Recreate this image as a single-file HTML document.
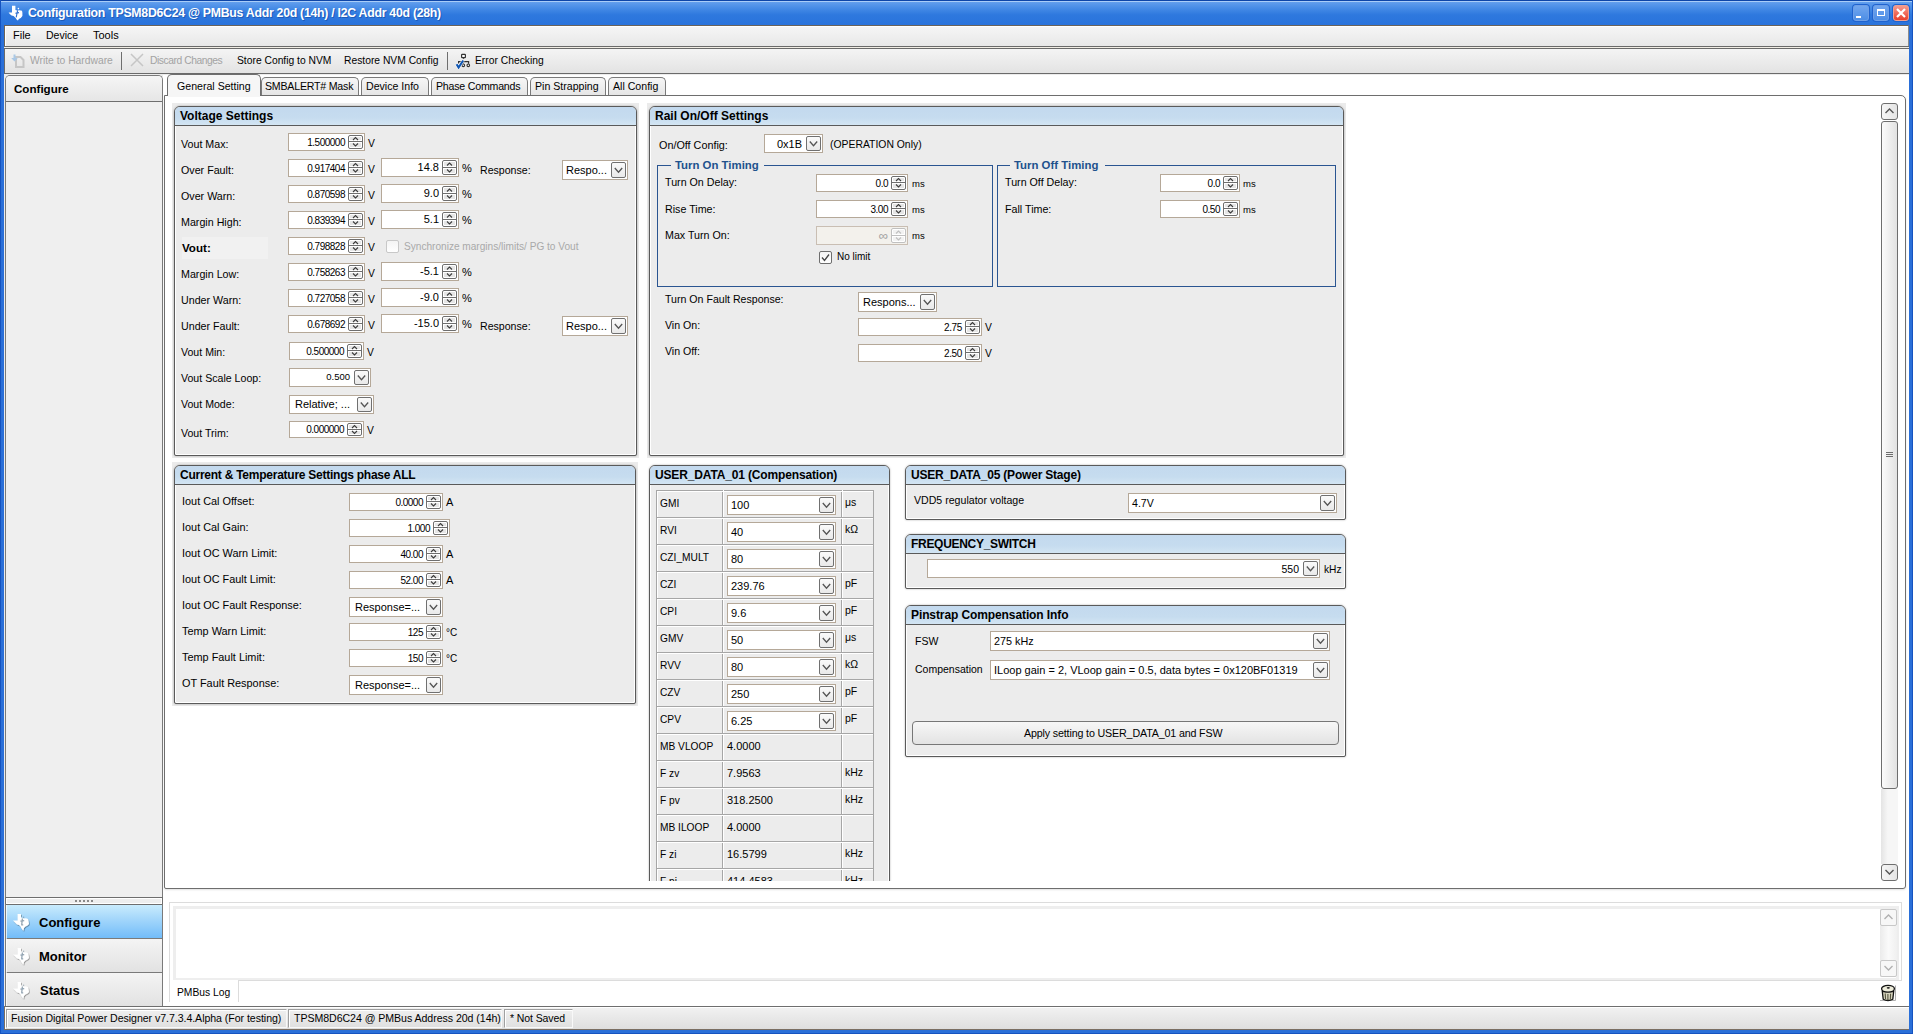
<!DOCTYPE html>
<html><head><meta charset="utf-8">
<style>
*{box-sizing:border-box;margin:0;padding:0}
html,body{width:1913px;height:1034px;overflow:hidden}
body{position:relative;background:#2a6fd8;font-family:"Liberation Sans",sans-serif;font-size:10.5px;color:#000}
.a{position:absolute}
.t{position:absolute;white-space:nowrap;line-height:normal}
.sp,.dd{position:absolute;border:1px solid #6e6e6e;border-radius:2px;background:#fff}
.dd{background:linear-gradient(#fafafa,#e9e9e9)}
.grp{position:absolute;border:1px solid #5a5a5a;border-radius:6px 6px 2px 2px;background:#ececec;box-shadow:0 0 2px rgba(0,0,0,.35),inset -1px -1px 0 #fff,inset 1px 0 0 #fff}
.tab{position:absolute;border:1px solid #7a7a7a;border-bottom:none;border-radius:5px 5px 0 0;background:linear-gradient(#f6f6f6,#e6e6e6)}
.nav{position:absolute;left:5px;width:158px;border-top:1px solid #7a7a7a;background:linear-gradient(#f4f4f4,#e2e2e2)}
.stp{position:absolute;top:1009px;height:19px;border:1px solid #a0a0a0;border-right-color:#f8f8f8;border-bottom-color:#f8f8f8;box-shadow:inset 1px 1px 0 #fff}
</style></head><body>
<div class="a" style="left:0px;top:0px;width:1913px;height:25px;background:linear-gradient(#9cc3f5 0,#6aa4ef 1px,#5d9bec 3px,#4389e5 9px,#2e78de 15px,#2a73dc 25px)"></div><svg class="a" style="left:8px;top:5px" width="16" height="16" viewBox="0 0 16 16"><path d="M4 0.8h3.4v4.2l1.6.6 2.4-.4 2.6.6.4 2v3.2l-1.6 2-2 1-.8 1.6-1-.6-1.4-2-2-2-2-.4-1.6-1.4-1.4-1.6h3.4z" fill="#fff"/><path d="M9.6 5.4l-1.4 7M7.4 8.2l3.6-.6" stroke="#2f6fd0" stroke-width="1.1" fill="none"/><circle cx="10.4" cy="3.6" r=".8" fill="#fff"/></svg><div class="t " style="left:28px;top:6px;font-size:12.3px;font-weight:bold;color:#fff;letter-spacing:-0.27px;text-shadow:1px 1px 0 #1f5bb8">Configuration TPSM8D6C24 @ PMBus Addr 20d (14h) / I2C Addr 40d (28h)</div><div class="a" style="left:0px;top:0px;width:1913px;height:1px;background:#0d45a8"></div><div class="a" style="left:0px;top:1px;width:1913px;height:1px;background:#a9cdf8"></div><div class="a" style="left:0px;top:0px;width:1px;height:1034px;background:#1553c0"></div><div class="a" style="left:1912px;top:0px;width:1px;height:1034px;background:#1553c0"></div><div class="a" style="left:0px;top:1033px;width:1913px;height:1px;background:#1553c0"></div><div class="a" style="left:1853px;top:5px;width:16px;height:16px;border-radius:3px;border:1px solid #6f9fe6;background:linear-gradient(#72a6ee,#4d8ee6);box-shadow:0 0 0 1px #1f63cf"></div><div class="a" style="left:1873px;top:5px;width:16px;height:16px;border-radius:3px;border:1px solid #6f9fe6;background:linear-gradient(#72a6ee,#4d8ee6);box-shadow:0 0 0 1px #1f63cf"></div><div class="a" style="left:1893px;top:5px;width:16px;height:16px;border-radius:3px;border:1px solid #f0a090;background:linear-gradient(#f59a8e,#e9402c);box-shadow:0 0 0 1px #1f63cf"></div><div class="a" style="left:1856px;top:16px;width:5px;height:2px;background:#fff"></div><div class="a" style="left:1877px;top:9px;width:8px;height:7px;border:1px solid #fff;border-top-width:2px"></div><svg class="a" style="left:1896px;top:8px" width="10" height="10"><path d="M1 1L9 9M9 1L1 9" stroke="#fff" stroke-width="2.2"/></svg><div class="a" style="left:4px;top:25px;width:1905px;height:1005px;background:#ececec"></div><div class="a" style="left:4px;top:25px;width:1905px;height:22px;background:linear-gradient(#f6f6f6,#e7e7e7);border-top:1px solid #6b6359;border-left:1px solid #6b6359;border-right:1px solid #8c8c8c;box-shadow:inset 1px 1px 0 #fff"></div><div class="a" style="left:4px;top:46px;width:1905px;height:1px;background:#6a6a6a"></div><div class="a" style="left:4px;top:47px;width:1905px;height:1px;background:#f1ede4"></div><div class="t " style="left:13px;top:29px;font-size:11px">File</div><div class="t " style="left:46px;top:29px;font-size:10.5px">Device</div><div class="t " style="left:93px;top:29px;font-size:11px">Tools</div><div class="a" style="left:4px;top:48px;width:1905px;height:26px;background:linear-gradient(#f4f4f4,#e3e3e3);border-top:1px solid #6a6a6a;border-bottom:1px solid #6a6a6a;border-left:1px solid #6a6a6a"></div><svg class="a" style="left:10px;top:54px" width="17" height="16" viewBox="0 0 17 16"><path d="M6 3h4.5l3 3v7h-7.5z" fill="none" stroke="#c6c6c6" stroke-width="2"/><path d="M4.5 0.5v4" stroke="#a9c8e6" stroke-width="2"/><path d="M1.2 4h6.6l-3.3 3.6z" fill="#a9c8e6"/></svg><div class="t " style="left:30px;top:55px;font-size:10.3px;color:#a3a3a3">Write to Hardware</div><div class="a" style="left:121px;top:52px;width:1px;height:18px;background:#6e6e6e"></div><svg class="a" style="left:130px;top:53px" width="14" height="14"><path d="M1 1L13 13M13 1L1 13" stroke="#c6c6c6" stroke-width="1.5"/></svg><div class="t " style="left:150px;top:55px;font-size:10.3px;color:#a3a3a3;letter-spacing:-0.45px">Discard Changes</div><div class="t " style="left:237px;top:55px;font-size:10.3px">Store Config to NVM</div><div class="t " style="left:344px;top:55px;font-size:10.3px">Restore NVM Config</div><div class="a" style="left:447px;top:52px;width:1px;height:18px;background:#6e6e6e"></div><svg class="a" style="left:455px;top:53px" width="16" height="16" viewBox="0 0 16 16"><rect x="6.6" y="1.3" width="3.8" height="3.3" rx=".6" fill="#fff" stroke="#333" stroke-width="1.2"/><path d="M8.5 4.6v1.2M3.6 10.6V8.6h10v2.2M8.3 8.6v2" stroke="#333" stroke-width="1.2" fill="none"/><circle cx="8.3" cy="12.3" r="1.3" fill="#fff" stroke="#333" stroke-width="1.1"/><circle cx="13.3" cy="12.3" r="1.3" fill="#fff" stroke="#333" stroke-width="1.1"/><path d="M1.6 11.2l2 3.3 4.6-7" stroke="#fff" stroke-width="3.2" fill="none" opacity=".8"/><path d="M1.6 11.2l2 3.3 4.6-7" stroke="#0f56b3" stroke-width="2.1" fill="none"/></svg><div class="t " style="left:475px;top:55px;font-size:10.3px">Error Checking</div><div class="a" style="left:5px;top:75px;width:158px;height:823px;background:#efefef;border-left:1px solid #7a7a7a;border-right:1px solid #7a7a7a;border-top:1px solid #7a7a7a;border-radius:5px 5px 0 0"></div><div class="a" style="left:6px;top:76px;width:156px;height:25px;background:linear-gradient(#f5f5f5,#e6e6e6);border-radius:4px 4px 0 0"></div><div class="a" style="left:6px;top:101px;width:156px;height:1px;background:#6e6e6e"></div><div class="t " style="left:14px;top:82px;font-size:11.6px;font-weight:bold">Configure</div><div class="a" style="left:5px;top:897px;width:158px;height:8px;background:#eeeeee;border:1px solid #6e6e6e;box-shadow:inset 1px 1px 0 #fff,inset -1px -1px 0 #fff"></div><div class="a" style="left:75px;top:900px;width:2px;height:2px;background:#8a8a8a"></div><div class="a" style="left:79px;top:900px;width:2px;height:2px;background:#8a8a8a"></div><div class="a" style="left:83px;top:900px;width:2px;height:2px;background:#8a8a8a"></div><div class="a" style="left:87px;top:900px;width:2px;height:2px;background:#8a8a8a"></div><div class="a" style="left:91px;top:900px;width:2px;height:2px;background:#8a8a8a"></div><div class="nav" style="top:904px;height:34px;background:linear-gradient(#c9ecfd,#a6d8fb 40%,#72bcf9);border-top:1px solid #6e6e6e"></div><div class="nav" style="top:938px;height:34px"></div><div class="nav" style="top:972px;height:34px"></div><div class="a" style="left:5px;top:904px;width:1px;height:102px;background:#7a7a7a"></div><div class="a" style="left:162px;top:904px;width:1px;height:102px;background:#7a7a7a"></div><div class="a" style="left:6px;top:905px;width:1px;height:101px;background:#fff;opacity:.7"></div><svg class="a" style="left:13px;top:914px;overflow:visible" width="17" height="17" viewBox="0 0 17 17"><defs><filter id="ds" x="-30%" y="-30%" width="160%" height="160%"><feDropShadow dx=".6" dy=".8" stdDeviation=".7" flood-color="#000" flood-opacity=".45"/></filter></defs><path filter="url(#ds)" d="M4.6 0h3.4v3.6l1.5.5 1.5.4 2-.2 2 .7.5 2 .5 3-1.5 1.5-2 1-1.5 1.5-.5 2.5-.5 0-1.5-2-1-2-1.5-1.5-2-.5-1.5-1.5-2.5-2.5h4.6z" fill="#fff"/><path d="M9.4 4.5l-.7 6.2M7.4 7.2l3.8-.5M8.2 10.8h2" stroke="#6f8598" stroke-width="1.3" fill="none" opacity=".75"/><circle cx="10.6" cy="3.2" r=".7" fill="#6f8598" opacity=".6"/></svg><svg class="a" style="left:13px;top:948px;overflow:visible" width="17" height="17" viewBox="0 0 17 17"><defs><filter id="ds" x="-30%" y="-30%" width="160%" height="160%"><feDropShadow dx=".6" dy=".8" stdDeviation=".7" flood-color="#000" flood-opacity=".45"/></filter></defs><path filter="url(#ds)" d="M4.6 0h3.4v3.6l1.5.5 1.5.4 2-.2 2 .7.5 2 .5 3-1.5 1.5-2 1-1.5 1.5-.5 2.5-.5 0-1.5-2-1-2-1.5-1.5-2-.5-1.5-1.5-2.5-2.5h4.6z" fill="#fff"/><path d="M9.4 4.5l-.7 6.2M7.4 7.2l3.8-.5M8.2 10.8h2" stroke="#6f8598" stroke-width="1.3" fill="none" opacity=".75"/><circle cx="10.6" cy="3.2" r=".7" fill="#6f8598" opacity=".6"/></svg><svg class="a" style="left:13px;top:982px;overflow:visible" width="17" height="17" viewBox="0 0 17 17"><defs><filter id="ds" x="-30%" y="-30%" width="160%" height="160%"><feDropShadow dx=".6" dy=".8" stdDeviation=".7" flood-color="#000" flood-opacity=".45"/></filter></defs><path filter="url(#ds)" d="M4.6 0h3.4v3.6l1.5.5 1.5.4 2-.2 2 .7.5 2 .5 3-1.5 1.5-2 1-1.5 1.5-.5 2.5-.5 0-1.5-2-1-2-1.5-1.5-2-.5-1.5-1.5-2.5-2.5h4.6z" fill="#fff"/><path d="M9.4 4.5l-.7 6.2M7.4 7.2l3.8-.5M8.2 10.8h2" stroke="#6f8598" stroke-width="1.3" fill="none" opacity=".75"/><circle cx="10.6" cy="3.2" r=".7" fill="#6f8598" opacity=".6"/></svg><div class="t " style="left:39px;top:915px;font-size:13px;font-weight:bold">Configure</div><div class="t " style="left:39px;top:949px;font-size:13px;font-weight:bold">Monitor</div><div class="t " style="left:40px;top:983px;font-size:13px;font-weight:bold">Status</div><div class="a" style="left:4px;top:1006px;width:1905px;height:24px;background:linear-gradient(#f2f2f2,#dedede);border-top:1px solid #6e6e6e;border-bottom:1px solid #7a6e62;border-left:1px solid #7a6e62;box-shadow:inset 1px 1px 0 #fff"></div><div class="stp" style="left:6px;width:281px"></div><div class="stp" style="left:288px;width:214px"></div><div class="stp" style="left:504px;width:69px"></div><div class="t " style="left:11px;top:1012px;font-size:10.6px;letter-spacing:-0.05px">Fusion Digital Power Designer v7.7.3.4.Alpha (For testing)</div><div class="t " style="left:294px;top:1012px;font-size:10.6px;letter-spacing:-0.05px">TPSM8D6C24 @ PMBus Address 20d (14h)</div><div class="t " style="left:510px;top:1012px;font-size:10.5px;letter-spacing:-0.1px">* Not Saved</div><div class="a" style="left:163px;top:75px;width:1746px;height:931px;background:#fff"></div><div class="tab" style="left:261px;top:77px;width:98px;height:18px"></div><div class="tab" style="left:361px;top:77px;width:68px;height:18px"></div><div class="tab" style="left:431px;top:77px;width:97px;height:18px"></div><div class="tab" style="left:530px;top:77px;width:76px;height:18px"></div><div class="tab" style="left:608px;top:77px;width:58px;height:18px"></div><div class="a" style="left:164px;top:95px;width:1742px;height:794px;border:1px solid #6e6e6e;border-radius:0 5px 3px 2px;background:#fff;box-shadow:0 1px 2px rgba(0,0,0,.12)"></div><div class="tab" style="left:167px;top:74px;width:94px;height:22px;background:#f6f6f6;border-color:#6e6e6e;z-index:2"></div><div class="a" style="left:168px;top:95px;width:92px;height:2px;background:#f6f6f6;z-index:2"></div><div style="position:absolute;z-index:3"><div class="t " style="left:177px;top:80px;font-size:10.6px">General Setting</div><div class="t " style="left:265px;top:80px;font-size:10.6px;letter-spacing:-0.2px">SMBALERT# Mask</div><div class="t " style="left:366px;top:80px;font-size:10.6px">Device Info</div><div class="t " style="left:436px;top:80px;font-size:10.6px;letter-spacing:-0.2px">Phase Commands</div><div class="t " style="left:535px;top:80px;font-size:10.6px">Pin Strapping</div><div class="t " style="left:613px;top:80px;font-size:10.6px">All Config</div></div><div class="a" style="left:1881px;top:103px;width:17px;height:17px;border:1px solid #6e6e6e;border-radius:3px;background:linear-gradient(90deg,#f6f6f6,#e4e4e4)"></div><svg class="a" style="left:1884px;top:107px" width="11" height="8"><polyline points="1.5,6 5.5,2 9.5,6" fill="none" stroke="#555" stroke-width="1.4"/></svg><div class="a" style="left:1881px;top:121px;width:17px;height:668px;border:1px solid #6e6e6e;border-radius:3px;background:linear-gradient(90deg,#fbfbfb,#e2e2e2)"></div><div class="a" style="left:1886px;top:452px;width:7px;height:1px;background:#6e6e6e"></div><div class="a" style="left:1886px;top:454px;width:7px;height:1px;background:#6e6e6e"></div><div class="a" style="left:1886px;top:456px;width:7px;height:1px;background:#6e6e6e"></div><div class="a" style="left:1881px;top:789px;width:17px;height:75px;background:linear-gradient(90deg,#e4e4e4,#f6f6f6 40%,#f6f6f6)"></div><div class="a" style="left:1881px;top:864px;width:17px;height:17px;border:1px solid #6e6e6e;border-radius:3px;background:linear-gradient(90deg,#f6f6f6,#e4e4e4)"></div><svg class="a" style="left:1884px;top:868px" width="11" height="8"><polyline points="1.5,2 5.5,6 9.5,2" fill="none" stroke="#555" stroke-width="1.4"/></svg><div class="a" style="left:169px;top:902px;width:1733px;height:79px;border:1px solid #dcdcdc;background:#fff"></div><div class="a" style="left:173px;top:906px;width:1726px;height:74px;border:3px solid #eeeeee;border-bottom-width:2px;background:#fff"></div><div class="a" style="left:1880px;top:909px;width:17px;height:68px;background:linear-gradient(90deg,#ebebeb,#fafafa 50%,#f0f0f0)"></div><div class="a" style="left:1880px;top:909px;width:17px;height:17px;border:1px solid #c8c8c8;border-radius:2px;background:#f7f7f7"></div><svg class="a" style="left:1883px;top:913px" width="11" height="8"><polyline points="1.5,6 5.5,2 9.5,6" fill="none" stroke="#b0b0b0" stroke-width="1.3"/></svg><div class="a" style="left:1880px;top:960px;width:17px;height:17px;border:1px solid #c8c8c8;border-radius:2px;background:#f7f7f7"></div><svg class="a" style="left:1883px;top:964px" width="11" height="8"><polyline points="1.5,2 5.5,6 9.5,2" fill="none" stroke="#b0b0b0" stroke-width="1.3"/></svg><div class="a" style="left:169px;top:980px;width:70px;height:22px;border-left:1px solid #dcdcdc;border-right:1px solid #dcdcdc;background:#fff"></div><div class="t " style="left:177px;top:987px;font-size:10.3px">PMBus Log</div><svg class="a" style="left:1880px;top:984px" width="17" height="18" viewBox="0 0 17 18"><path d="M15.5 1.5V16.5H0" stroke="#b0b0b0" stroke-width="1" fill="none"/><path d="M2.3 7.5L3.2 15.2Q8 17.8 12.8 15.2L13.7 7.5z" fill="#d8d6c0" stroke="#111" stroke-width="1.3"/><path d="M5.2 9.5l.4 5.8M7.9 10v6.2M10.6 9.8l-.3 6" stroke="#55543f" stroke-width="1.1"/><ellipse cx="8" cy="4.8" rx="6.4" ry="3.4" fill="#eeeddb" stroke="#111" stroke-width="1.3"/><ellipse cx="8.3" cy="3.8" rx="1.6" ry=".9" fill="#222"/></svg><div class="a" style="left:0;top:0;width:1913px;height:1034px;clip-path:inset(96px 33px 153px 166px)"><div class="a" style="left:172px;top:103px;width:467px;height:355px;background:#ebebeb"></div><div class="grp" style="left:174px;top:106px;width:463px;height:350px"></div><div class="a" style="left:175px;top:107px;width:461px;height:19px;background:linear-gradient(#c3d9ee,#c6dcef 60%,#d3e5f3);border-bottom:1px solid #5a5a5a;border-radius:5px 5px 0 0"></div><div class="t " style="left:180px;top:109px;font-size:12px;font-weight:bold">Voltage Settings</div><div class="a" style="left:647px;top:103px;width:699px;height:355px;background:#ebebeb"></div><div class="grp" style="left:649px;top:106px;width:695px;height:350px"></div><div class="a" style="left:650px;top:107px;width:693px;height:19px;background:linear-gradient(#c3d9ee,#c6dcef 60%,#d3e5f3);border-bottom:1px solid #5a5a5a;border-radius:5px 5px 0 0"></div><div class="t " style="left:655px;top:109px;font-size:12px;font-weight:bold">Rail On/Off Settings</div><div class="a" style="left:172px;top:462px;width:466px;height:244px;background:#ebebeb"></div><div class="grp" style="left:174px;top:465px;width:462px;height:239px"></div><div class="a" style="left:175px;top:466px;width:460px;height:19px;background:linear-gradient(#c3d9ee,#c6dcef 60%,#d3e5f3);border-bottom:1px solid #5a5a5a;border-radius:5px 5px 0 0"></div><div class="t " style="left:180px;top:468px;font-size:12px;font-weight:bold;letter-spacing:-0.25px">Current &amp; Temperature Settings phase ALL</div><div class="grp" style="left:649px;top:465px;width:241px;height:450px"></div><div class="a" style="left:650px;top:466px;width:239px;height:19px;background:linear-gradient(#c3d9ee,#c6dcef 60%,#d3e5f3);border-bottom:1px solid #5a5a5a;border-radius:5px 5px 0 0"></div><div class="t " style="left:655px;top:468px;font-size:12px;font-weight:bold;letter-spacing:-0.15px">USER_DATA_01 (Compensation)</div><div class="grp" style="left:905px;top:465px;width:441px;height:55px"></div><div class="a" style="left:906px;top:466px;width:439px;height:19px;background:linear-gradient(#c3d9ee,#c6dcef 60%,#d3e5f3);border-bottom:1px solid #5a5a5a;border-radius:5px 5px 0 0"></div><div class="t " style="left:911px;top:468px;font-size:12px;font-weight:bold;letter-spacing:-0.2px">USER_DATA_05 (Power Stage)</div><div class="grp" style="left:905px;top:534px;width:441px;height:55px"></div><div class="a" style="left:906px;top:535px;width:439px;height:19px;background:linear-gradient(#c3d9ee,#c6dcef 60%,#d3e5f3);border-bottom:1px solid #5a5a5a;border-radius:5px 5px 0 0"></div><div class="t " style="left:911px;top:537px;font-size:12px;font-weight:bold;letter-spacing:-0.3px">FREQUENCY_SWITCH</div><div class="grp" style="left:905px;top:605px;width:441px;height:152px"></div><div class="a" style="left:906px;top:606px;width:439px;height:19px;background:linear-gradient(#c3d9ee,#c6dcef 60%,#d3e5f3);border-bottom:1px solid #5a5a5a;border-radius:5px 5px 0 0"></div><div class="t " style="left:911px;top:608px;font-size:12px;font-weight:bold;letter-spacing:-0.1px">Pinstrap Compensation Info</div><div class="t " style="left:181px;top:138px;font-size:10.7px">Vout Max:</div><div class="a" style="left:288px;top:133px;width:77px;height:18px;background:#fff;border:1px solid #b5a898"></div><div class="sp" style="left:348px;top:135px;width:15px;height:14px;border-color:#6e6e6e"><svg width="13" height="12" style="position:absolute;left:0;top:0"><rect x="1" y="1" width="11" height="3" fill="#e6e6e6"/><rect x="1" y="7" width="11" height="4" fill="#e6e6e6"/><rect x="0" y="5" width="13" height="1" fill="#6e6e6e"/><polyline points="4.0,4.0 6.5,1.5 9.0,4.0" fill="none" stroke="#3c3c3c" stroke-width="1.1"/><polyline points="4.0,7.5 6.5,10.0 9.0,7.5" fill="none" stroke="#3c3c3c" stroke-width="1.1"/></svg></div><div class="t" style="right:1568px;top:137px;font-size:10px;letter-spacing:-0.5px">1.500000</div><div class="t " style="left:368px;top:138px;font-size:10.3px">V</div><div class="t " style="left:181px;top:164px;font-size:10.7px">Over Fault:</div><div class="a" style="left:288px;top:159px;width:77px;height:18px;background:#fff;border:1px solid #b5a898"></div><div class="sp" style="left:348px;top:161px;width:15px;height:14px;border-color:#6e6e6e"><svg width="13" height="12" style="position:absolute;left:0;top:0"><rect x="1" y="1" width="11" height="3" fill="#e6e6e6"/><rect x="1" y="7" width="11" height="4" fill="#e6e6e6"/><rect x="0" y="5" width="13" height="1" fill="#6e6e6e"/><polyline points="4.0,4.0 6.5,1.5 9.0,4.0" fill="none" stroke="#3c3c3c" stroke-width="1.1"/><polyline points="4.0,7.5 6.5,10.0 9.0,7.5" fill="none" stroke="#3c3c3c" stroke-width="1.1"/></svg></div><div class="t" style="right:1568px;top:163px;font-size:10px;letter-spacing:-0.5px">0.917404</div><div class="t " style="left:368px;top:164px;font-size:10.3px">V</div><div class="a" style="left:381px;top:158px;width:78px;height:19px;background:#fff;border:1px solid #b5a898"></div><div class="sp" style="left:442px;top:160px;width:15px;height:15px;border-color:#6e6e6e"><svg width="13" height="13" style="position:absolute;left:0;top:0"><rect x="1" y="1" width="11" height="4" fill="#e6e6e6"/><rect x="1" y="8" width="11" height="4" fill="#e6e6e6"/><rect x="0" y="6" width="13" height="1" fill="#6e6e6e"/><polyline points="4.0,4.5 6.5,2.0 9.0,4.5" fill="none" stroke="#3c3c3c" stroke-width="1.1"/><polyline points="4.0,8.5 6.5,11.0 9.0,8.5" fill="none" stroke="#3c3c3c" stroke-width="1.1"/></svg></div><div class="t" style="right:1474px;top:161px;font-size:11px">14.8</div><div class="t " style="left:462px;top:162px;font-size:11px">%</div><div class="t " style="left:181px;top:190px;font-size:10.7px">Over Warn:</div><div class="a" style="left:288px;top:185px;width:77px;height:18px;background:#fff;border:1px solid #b5a898"></div><div class="sp" style="left:348px;top:187px;width:15px;height:14px;border-color:#6e6e6e"><svg width="13" height="12" style="position:absolute;left:0;top:0"><rect x="1" y="1" width="11" height="3" fill="#e6e6e6"/><rect x="1" y="7" width="11" height="4" fill="#e6e6e6"/><rect x="0" y="5" width="13" height="1" fill="#6e6e6e"/><polyline points="4.0,4.0 6.5,1.5 9.0,4.0" fill="none" stroke="#3c3c3c" stroke-width="1.1"/><polyline points="4.0,7.5 6.5,10.0 9.0,7.5" fill="none" stroke="#3c3c3c" stroke-width="1.1"/></svg></div><div class="t" style="right:1568px;top:189px;font-size:10px;letter-spacing:-0.5px">0.870598</div><div class="t " style="left:368px;top:190px;font-size:10.3px">V</div><div class="a" style="left:381px;top:184px;width:78px;height:19px;background:#fff;border:1px solid #b5a898"></div><div class="sp" style="left:442px;top:186px;width:15px;height:15px;border-color:#6e6e6e"><svg width="13" height="13" style="position:absolute;left:0;top:0"><rect x="1" y="1" width="11" height="4" fill="#e6e6e6"/><rect x="1" y="8" width="11" height="4" fill="#e6e6e6"/><rect x="0" y="6" width="13" height="1" fill="#6e6e6e"/><polyline points="4.0,4.5 6.5,2.0 9.0,4.5" fill="none" stroke="#3c3c3c" stroke-width="1.1"/><polyline points="4.0,8.5 6.5,11.0 9.0,8.5" fill="none" stroke="#3c3c3c" stroke-width="1.1"/></svg></div><div class="t" style="right:1474px;top:187px;font-size:11px">9.0</div><div class="t " style="left:462px;top:188px;font-size:11px">%</div><div class="t " style="left:181px;top:216px;font-size:10.7px">Margin High:</div><div class="a" style="left:288px;top:211px;width:77px;height:18px;background:#fff;border:1px solid #b5a898"></div><div class="sp" style="left:348px;top:213px;width:15px;height:14px;border-color:#6e6e6e"><svg width="13" height="12" style="position:absolute;left:0;top:0"><rect x="1" y="1" width="11" height="3" fill="#e6e6e6"/><rect x="1" y="7" width="11" height="4" fill="#e6e6e6"/><rect x="0" y="5" width="13" height="1" fill="#6e6e6e"/><polyline points="4.0,4.0 6.5,1.5 9.0,4.0" fill="none" stroke="#3c3c3c" stroke-width="1.1"/><polyline points="4.0,7.5 6.5,10.0 9.0,7.5" fill="none" stroke="#3c3c3c" stroke-width="1.1"/></svg></div><div class="t" style="right:1568px;top:215px;font-size:10px;letter-spacing:-0.5px">0.839394</div><div class="t " style="left:368px;top:216px;font-size:10.3px">V</div><div class="a" style="left:381px;top:210px;width:78px;height:19px;background:#fff;border:1px solid #b5a898"></div><div class="sp" style="left:442px;top:212px;width:15px;height:15px;border-color:#6e6e6e"><svg width="13" height="13" style="position:absolute;left:0;top:0"><rect x="1" y="1" width="11" height="4" fill="#e6e6e6"/><rect x="1" y="8" width="11" height="4" fill="#e6e6e6"/><rect x="0" y="6" width="13" height="1" fill="#6e6e6e"/><polyline points="4.0,4.5 6.5,2.0 9.0,4.5" fill="none" stroke="#3c3c3c" stroke-width="1.1"/><polyline points="4.0,8.5 6.5,11.0 9.0,8.5" fill="none" stroke="#3c3c3c" stroke-width="1.1"/></svg></div><div class="t" style="right:1474px;top:213px;font-size:11px">5.1</div><div class="t " style="left:462px;top:214px;font-size:11px">%</div><div class="a" style="left:182px;top:237px;width:86px;height:22px;background:#f1f1f1"></div><div class="t " style="left:182px;top:241px;font-size:11.6px;font-weight:bold">Vout:</div><div class="a" style="left:288px;top:237px;width:77px;height:18px;background:#fff;border:1px solid #b5a898"></div><div class="sp" style="left:348px;top:239px;width:15px;height:14px;border-color:#6e6e6e"><svg width="13" height="12" style="position:absolute;left:0;top:0"><rect x="1" y="1" width="11" height="3" fill="#e6e6e6"/><rect x="1" y="7" width="11" height="4" fill="#e6e6e6"/><rect x="0" y="5" width="13" height="1" fill="#6e6e6e"/><polyline points="4.0,4.0 6.5,1.5 9.0,4.0" fill="none" stroke="#3c3c3c" stroke-width="1.1"/><polyline points="4.0,7.5 6.5,10.0 9.0,7.5" fill="none" stroke="#3c3c3c" stroke-width="1.1"/></svg></div><div class="t" style="right:1568px;top:241px;font-size:10px;letter-spacing:-0.5px">0.798828</div><div class="t " style="left:368px;top:242px;font-size:10.3px">V</div><div class="t " style="left:181px;top:268px;font-size:10.7px">Margin Low:</div><div class="a" style="left:288px;top:263px;width:77px;height:18px;background:#fff;border:1px solid #b5a898"></div><div class="sp" style="left:348px;top:265px;width:15px;height:14px;border-color:#6e6e6e"><svg width="13" height="12" style="position:absolute;left:0;top:0"><rect x="1" y="1" width="11" height="3" fill="#e6e6e6"/><rect x="1" y="7" width="11" height="4" fill="#e6e6e6"/><rect x="0" y="5" width="13" height="1" fill="#6e6e6e"/><polyline points="4.0,4.0 6.5,1.5 9.0,4.0" fill="none" stroke="#3c3c3c" stroke-width="1.1"/><polyline points="4.0,7.5 6.5,10.0 9.0,7.5" fill="none" stroke="#3c3c3c" stroke-width="1.1"/></svg></div><div class="t" style="right:1568px;top:267px;font-size:10px;letter-spacing:-0.5px">0.758263</div><div class="t " style="left:368px;top:268px;font-size:10.3px">V</div><div class="a" style="left:381px;top:262px;width:78px;height:19px;background:#fff;border:1px solid #b5a898"></div><div class="sp" style="left:442px;top:264px;width:15px;height:15px;border-color:#6e6e6e"><svg width="13" height="13" style="position:absolute;left:0;top:0"><rect x="1" y="1" width="11" height="4" fill="#e6e6e6"/><rect x="1" y="8" width="11" height="4" fill="#e6e6e6"/><rect x="0" y="6" width="13" height="1" fill="#6e6e6e"/><polyline points="4.0,4.5 6.5,2.0 9.0,4.5" fill="none" stroke="#3c3c3c" stroke-width="1.1"/><polyline points="4.0,8.5 6.5,11.0 9.0,8.5" fill="none" stroke="#3c3c3c" stroke-width="1.1"/></svg></div><div class="t" style="right:1474px;top:265px;font-size:11px">-5.1</div><div class="t " style="left:462px;top:266px;font-size:11px">%</div><div class="t " style="left:181px;top:294px;font-size:10.7px">Under Warn:</div><div class="a" style="left:288px;top:289px;width:77px;height:18px;background:#fff;border:1px solid #b5a898"></div><div class="sp" style="left:348px;top:291px;width:15px;height:14px;border-color:#6e6e6e"><svg width="13" height="12" style="position:absolute;left:0;top:0"><rect x="1" y="1" width="11" height="3" fill="#e6e6e6"/><rect x="1" y="7" width="11" height="4" fill="#e6e6e6"/><rect x="0" y="5" width="13" height="1" fill="#6e6e6e"/><polyline points="4.0,4.0 6.5,1.5 9.0,4.0" fill="none" stroke="#3c3c3c" stroke-width="1.1"/><polyline points="4.0,7.5 6.5,10.0 9.0,7.5" fill="none" stroke="#3c3c3c" stroke-width="1.1"/></svg></div><div class="t" style="right:1568px;top:293px;font-size:10px;letter-spacing:-0.5px">0.727058</div><div class="t " style="left:368px;top:294px;font-size:10.3px">V</div><div class="a" style="left:381px;top:288px;width:78px;height:19px;background:#fff;border:1px solid #b5a898"></div><div class="sp" style="left:442px;top:290px;width:15px;height:15px;border-color:#6e6e6e"><svg width="13" height="13" style="position:absolute;left:0;top:0"><rect x="1" y="1" width="11" height="4" fill="#e6e6e6"/><rect x="1" y="8" width="11" height="4" fill="#e6e6e6"/><rect x="0" y="6" width="13" height="1" fill="#6e6e6e"/><polyline points="4.0,4.5 6.5,2.0 9.0,4.5" fill="none" stroke="#3c3c3c" stroke-width="1.1"/><polyline points="4.0,8.5 6.5,11.0 9.0,8.5" fill="none" stroke="#3c3c3c" stroke-width="1.1"/></svg></div><div class="t" style="right:1474px;top:291px;font-size:11px">-9.0</div><div class="t " style="left:462px;top:292px;font-size:11px">%</div><div class="t " style="left:181px;top:320px;font-size:10.7px">Under Fault:</div><div class="a" style="left:288px;top:315px;width:77px;height:18px;background:#fff;border:1px solid #b5a898"></div><div class="sp" style="left:348px;top:317px;width:15px;height:14px;border-color:#6e6e6e"><svg width="13" height="12" style="position:absolute;left:0;top:0"><rect x="1" y="1" width="11" height="3" fill="#e6e6e6"/><rect x="1" y="7" width="11" height="4" fill="#e6e6e6"/><rect x="0" y="5" width="13" height="1" fill="#6e6e6e"/><polyline points="4.0,4.0 6.5,1.5 9.0,4.0" fill="none" stroke="#3c3c3c" stroke-width="1.1"/><polyline points="4.0,7.5 6.5,10.0 9.0,7.5" fill="none" stroke="#3c3c3c" stroke-width="1.1"/></svg></div><div class="t" style="right:1568px;top:319px;font-size:10px;letter-spacing:-0.5px">0.678692</div><div class="t " style="left:368px;top:320px;font-size:10.3px">V</div><div class="a" style="left:381px;top:314px;width:78px;height:19px;background:#fff;border:1px solid #b5a898"></div><div class="sp" style="left:442px;top:316px;width:15px;height:15px;border-color:#6e6e6e"><svg width="13" height="13" style="position:absolute;left:0;top:0"><rect x="1" y="1" width="11" height="4" fill="#e6e6e6"/><rect x="1" y="8" width="11" height="4" fill="#e6e6e6"/><rect x="0" y="6" width="13" height="1" fill="#6e6e6e"/><polyline points="4.0,4.5 6.5,2.0 9.0,4.5" fill="none" stroke="#3c3c3c" stroke-width="1.1"/><polyline points="4.0,8.5 6.5,11.0 9.0,8.5" fill="none" stroke="#3c3c3c" stroke-width="1.1"/></svg></div><div class="t" style="right:1474px;top:317px;font-size:11px">-15.0</div><div class="t " style="left:462px;top:318px;font-size:11px">%</div><div class="a" style="left:386px;top:240px;width:13px;height:13px;border:1px solid #c8c8c8;border-radius:2px;background:linear-gradient(#f4f4f4,#fff)"></div><div class="t " style="left:404px;top:241px;font-size:10.1px;color:#a9a9a9">Synchronize margins/limits/ PG to Vout</div><div class="t " style="left:480px;top:164px;font-size:10.6px">Response:</div><div class="a" style="left:562px;top:160px;width:66px;height:20px;background:#fff;border:1px solid #b5a898"></div><div class="dd" style="left:611px;top:162px;width:15px;height:16px;border-color:#707070"><svg width="15" height="16" style="position:absolute;left:-1px;top:-1px"><polyline points="3.8,6.0 7.5,10.2 11.2,6.0" fill="none" stroke="#555" stroke-width="1.3"/></svg></div><div class="t " style="left:566px;top:164px;font-size:11px">Respo...</div><div class="t " style="left:480px;top:320px;font-size:10.6px">Response:</div><div class="a" style="left:562px;top:316px;width:66px;height:20px;background:#fff;border:1px solid #b5a898"></div><div class="dd" style="left:611px;top:318px;width:15px;height:16px;border-color:#707070"><svg width="15" height="16" style="position:absolute;left:-1px;top:-1px"><polyline points="3.8,6.0 7.5,10.2 11.2,6.0" fill="none" stroke="#555" stroke-width="1.3"/></svg></div><div class="t " style="left:566px;top:320px;font-size:11px">Respo...</div><div class="t " style="left:181px;top:346px;font-size:10.6px">Vout Min:</div><div class="a" style="left:289px;top:342px;width:75px;height:18px;background:#fff;border:1px solid #b5a898"></div><div class="sp" style="left:347px;top:344px;width:15px;height:14px;border-color:#6e6e6e"><svg width="13" height="12" style="position:absolute;left:0;top:0"><rect x="1" y="1" width="11" height="3" fill="#e6e6e6"/><rect x="1" y="7" width="11" height="4" fill="#e6e6e6"/><rect x="0" y="5" width="13" height="1" fill="#6e6e6e"/><polyline points="4.0,4.0 6.5,1.5 9.0,4.0" fill="none" stroke="#3c3c3c" stroke-width="1.1"/><polyline points="4.0,7.5 6.5,10.0 9.0,7.5" fill="none" stroke="#3c3c3c" stroke-width="1.1"/></svg></div><div class="t" style="right:1569px;top:346px;font-size:10px;letter-spacing:-0.5px">0.500000</div><div class="t " style="left:367px;top:347px;font-size:10.3px">V</div><div class="t " style="left:181px;top:372px;font-size:10.6px">Vout Scale Loop:</div><div class="a" style="left:289px;top:368px;width:82px;height:19px;background:#fff;border:1px solid #b5a898"></div><div class="dd" style="left:354px;top:370px;width:15px;height:15px;border-color:#707070"><svg width="15" height="15" style="position:absolute;left:-1px;top:-1px"><polyline points="3.8,5.5 7.5,9.7 11.2,5.5" fill="none" stroke="#555" stroke-width="1.3"/></svg></div><div class="t" style="right:1563px;top:371px;font-size:9.5px">0.500</div><div class="t " style="left:181px;top:398px;font-size:10.6px">Vout Mode:</div><div class="a" style="left:289px;top:395px;width:85px;height:19px;background:#fff;border:1px solid #b5a898"></div><div class="dd" style="left:357px;top:397px;width:15px;height:15px;border-color:#707070"><svg width="15" height="15" style="position:absolute;left:-1px;top:-1px"><polyline points="3.8,5.5 7.5,9.7 11.2,5.5" fill="none" stroke="#555" stroke-width="1.3"/></svg></div><div class="t " style="left:295px;top:398px;font-size:11px">Relative; ...</div><div class="t " style="left:181px;top:427px;font-size:10.6px">Vout Trim:</div><div class="a" style="left:289px;top:421px;width:75px;height:17px;background:#fff;border:1px solid #b5a898"></div><div class="sp" style="left:347px;top:423px;width:15px;height:13px;border-color:#6e6e6e"><svg width="13" height="11" style="position:absolute;left:0;top:0"><rect x="1" y="1" width="11" height="3" fill="#e6e6e6"/><rect x="1" y="7" width="11" height="3" fill="#e6e6e6"/><rect x="0" y="5" width="13" height="1" fill="#6e6e6e"/><polyline points="4.0,4.0 6.5,1.5 9.0,4.0" fill="none" stroke="#3c3c3c" stroke-width="1.1"/><polyline points="4.0,7.0 6.5,9.5 9.0,7.0" fill="none" stroke="#3c3c3c" stroke-width="1.1"/></svg></div><div class="t" style="right:1569px;top:424px;font-size:10px;letter-spacing:-0.5px">0.000000</div><div class="t " style="left:367px;top:425px;font-size:10.3px">V</div><div class="t " style="left:659px;top:139px;font-size:10.8px">On/Off Config:</div><div class="a" style="left:764px;top:134px;width:59px;height:19px;background:#fff;border:1px solid #b5a898"></div><div class="dd" style="left:806px;top:136px;width:15px;height:15px;border-color:#707070"><svg width="15" height="15" style="position:absolute;left:-1px;top:-1px"><polyline points="3.8,5.5 7.5,9.7 11.2,5.5" fill="none" stroke="#555" stroke-width="1.3"/></svg></div><div class="t" style="right:1111px;top:138px;font-size:11px">0x1B</div><div class="t " style="left:830px;top:139px;font-size:10.4px">(OPERATION Only)</div><div class="a" style="left:657px;top:165px;width:336px;height:122px;border:1px solid #2a5591"></div><div class="a" style="left:671px;top:159px;width:93px;height:12px;background:#ececec"></div><div class="t " style="left:675px;top:159px;font-size:11.4px;font-weight:bold;color:#21518c">Turn On Timing</div><div class="a" style="left:997px;top:165px;width:339px;height:122px;border:1px solid #2a5591"></div><div class="a" style="left:1010px;top:159px;width:95px;height:12px;background:#ececec"></div><div class="t " style="left:1014px;top:159px;font-size:11.4px;font-weight:bold;color:#21518c">Turn Off Timing</div><div class="t " style="left:665px;top:176px;font-size:10.7px">Turn On Delay:</div><div class="a" style="left:816px;top:174px;width:92px;height:18px;background:#fff;border:1px solid #b5a898"></div><div class="sp" style="left:891px;top:176px;width:15px;height:14px;border-color:#6e6e6e"><svg width="13" height="12" style="position:absolute;left:0;top:0"><rect x="1" y="1" width="11" height="3" fill="#e6e6e6"/><rect x="1" y="7" width="11" height="4" fill="#e6e6e6"/><rect x="0" y="5" width="13" height="1" fill="#6e6e6e"/><polyline points="4.0,4.0 6.5,1.5 9.0,4.0" fill="none" stroke="#3c3c3c" stroke-width="1.1"/><polyline points="4.0,7.5 6.5,10.0 9.0,7.5" fill="none" stroke="#3c3c3c" stroke-width="1.1"/></svg></div><div class="t" style="right:1025px;top:178px;font-size:10px;letter-spacing:-0.5px">0.0</div><div class="t " style="left:912px;top:178px;font-size:9.5px">ms</div><div class="t " style="left:665px;top:203px;font-size:10.7px">Rise Time:</div><div class="a" style="left:816px;top:200px;width:92px;height:18px;background:#fff;border:1px solid #b5a898"></div><div class="sp" style="left:891px;top:202px;width:15px;height:14px;border-color:#6e6e6e"><svg width="13" height="12" style="position:absolute;left:0;top:0"><rect x="1" y="1" width="11" height="3" fill="#e6e6e6"/><rect x="1" y="7" width="11" height="4" fill="#e6e6e6"/><rect x="0" y="5" width="13" height="1" fill="#6e6e6e"/><polyline points="4.0,4.0 6.5,1.5 9.0,4.0" fill="none" stroke="#3c3c3c" stroke-width="1.1"/><polyline points="4.0,7.5 6.5,10.0 9.0,7.5" fill="none" stroke="#3c3c3c" stroke-width="1.1"/></svg></div><div class="t" style="right:1025px;top:204px;font-size:10px;letter-spacing:-0.5px">3.00</div><div class="t " style="left:912px;top:204px;font-size:9.5px">ms</div><div class="t " style="left:665px;top:229px;font-size:10.7px">Max Turn On:</div><div class="a" style="left:816px;top:226px;width:92px;height:19px;background:#f3f1ec;border:1px solid #c9beb3"></div><div class="sp" style="left:891px;top:228px;width:15px;height:15px;border-color:#c0c0c0"><svg width="13" height="13" style="position:absolute;left:0;top:0"><rect x="1" y="1" width="11" height="4" fill="#f2f2f2"/><rect x="1" y="8" width="11" height="4" fill="#f2f2f2"/><rect x="0" y="6" width="13" height="1" fill="#c0c0c0"/><polyline points="4.0,4.5 6.5,2.0 9.0,4.5" fill="none" stroke="#c0c0c0" stroke-width="1.1"/><polyline points="4.0,8.5 6.5,11.0 9.0,8.5" fill="none" stroke="#c0c0c0" stroke-width="1.1"/></svg></div><div class="t" style="right:1025px;top:228px;font-size:13px;color:#a0a0a0">&#8734;</div><div class="t " style="left:912px;top:230px;font-size:9.5px">ms</div><div class="a" style="left:819px;top:251px;width:13px;height:13px;border:1px solid #6e6e6e;border-radius:2px;background:linear-gradient(#f4f4f4,#fff)"></div><svg class="a" style="left:819px;top:251px" width="13" height="13"><polyline points="3,6.5 5.5,9.5 10,3.5" fill="none" stroke="#444" stroke-width="1.3"/></svg><div class="t " style="left:837px;top:251px;font-size:10px">No limit</div><div class="t " style="left:1005px;top:176px;font-size:10.7px">Turn Off Delay:</div><div class="a" style="left:1160px;top:174px;width:80px;height:18px;background:#fff;border:1px solid #b5a898"></div><div class="sp" style="left:1223px;top:176px;width:15px;height:14px;border-color:#6e6e6e"><svg width="13" height="12" style="position:absolute;left:0;top:0"><rect x="1" y="1" width="11" height="3" fill="#e6e6e6"/><rect x="1" y="7" width="11" height="4" fill="#e6e6e6"/><rect x="0" y="5" width="13" height="1" fill="#6e6e6e"/><polyline points="4.0,4.0 6.5,1.5 9.0,4.0" fill="none" stroke="#3c3c3c" stroke-width="1.1"/><polyline points="4.0,7.5 6.5,10.0 9.0,7.5" fill="none" stroke="#3c3c3c" stroke-width="1.1"/></svg></div><div class="t" style="right:693px;top:178px;font-size:10px;letter-spacing:-0.5px">0.0</div><div class="t " style="left:1243px;top:178px;font-size:9.5px">ms</div><div class="t " style="left:1005px;top:203px;font-size:10.7px">Fall Time:</div><div class="a" style="left:1160px;top:200px;width:80px;height:18px;background:#fff;border:1px solid #b5a898"></div><div class="sp" style="left:1223px;top:202px;width:15px;height:14px;border-color:#6e6e6e"><svg width="13" height="12" style="position:absolute;left:0;top:0"><rect x="1" y="1" width="11" height="3" fill="#e6e6e6"/><rect x="1" y="7" width="11" height="4" fill="#e6e6e6"/><rect x="0" y="5" width="13" height="1" fill="#6e6e6e"/><polyline points="4.0,4.0 6.5,1.5 9.0,4.0" fill="none" stroke="#3c3c3c" stroke-width="1.1"/><polyline points="4.0,7.5 6.5,10.0 9.0,7.5" fill="none" stroke="#3c3c3c" stroke-width="1.1"/></svg></div><div class="t" style="right:693px;top:204px;font-size:10px;letter-spacing:-0.5px">0.50</div><div class="t " style="left:1243px;top:204px;font-size:9.5px">ms</div><div class="t " style="left:665px;top:293px;font-size:10.6px">Turn On Fault Response:</div><div class="a" style="left:858px;top:292px;width:79px;height:20px;background:#fff;border:1px solid #b5a898"></div><div class="dd" style="left:920px;top:294px;width:15px;height:16px;border-color:#707070"><svg width="15" height="16" style="position:absolute;left:-1px;top:-1px"><polyline points="3.8,6.0 7.5,10.2 11.2,6.0" fill="none" stroke="#555" stroke-width="1.3"/></svg></div><div class="t " style="left:863px;top:296px;font-size:11px">Respons...</div><div class="t " style="left:665px;top:319px;font-size:10.6px">Vin On:</div><div class="a" style="left:858px;top:318px;width:124px;height:18px;background:#fff;border:1px solid #b5a898"></div><div class="sp" style="left:965px;top:320px;width:15px;height:14px;border-color:#6e6e6e"><svg width="13" height="12" style="position:absolute;left:0;top:0"><rect x="1" y="1" width="11" height="3" fill="#e6e6e6"/><rect x="1" y="7" width="11" height="4" fill="#e6e6e6"/><rect x="0" y="5" width="13" height="1" fill="#6e6e6e"/><polyline points="4.0,4.0 6.5,1.5 9.0,4.0" fill="none" stroke="#3c3c3c" stroke-width="1.1"/><polyline points="4.0,7.5 6.5,10.0 9.0,7.5" fill="none" stroke="#3c3c3c" stroke-width="1.1"/></svg></div><div class="t" style="right:951px;top:322px;font-size:10px;letter-spacing:-0.35px">2.75</div><div class="t " style="left:985px;top:322px;font-size:10.3px">V</div><div class="t " style="left:665px;top:345px;font-size:10.6px">Vin Off:</div><div class="a" style="left:858px;top:344px;width:124px;height:18px;background:#fff;border:1px solid #b5a898"></div><div class="sp" style="left:965px;top:346px;width:15px;height:14px;border-color:#6e6e6e"><svg width="13" height="12" style="position:absolute;left:0;top:0"><rect x="1" y="1" width="11" height="3" fill="#e6e6e6"/><rect x="1" y="7" width="11" height="4" fill="#e6e6e6"/><rect x="0" y="5" width="13" height="1" fill="#6e6e6e"/><polyline points="4.0,4.0 6.5,1.5 9.0,4.0" fill="none" stroke="#3c3c3c" stroke-width="1.1"/><polyline points="4.0,7.5 6.5,10.0 9.0,7.5" fill="none" stroke="#3c3c3c" stroke-width="1.1"/></svg></div><div class="t" style="right:951px;top:348px;font-size:10px;letter-spacing:-0.35px">2.50</div><div class="t " style="left:985px;top:348px;font-size:10.3px">V</div><div class="t " style="left:182px;top:495px;font-size:10.9px">Iout Cal Offset:</div><div class="a" style="left:349px;top:493px;width:94px;height:18px;background:#fff;border:1px solid #b5a898"></div><div class="sp" style="left:426px;top:495px;width:15px;height:14px;border-color:#6e6e6e"><svg width="13" height="12" style="position:absolute;left:0;top:0"><rect x="1" y="1" width="11" height="3" fill="#e6e6e6"/><rect x="1" y="7" width="11" height="4" fill="#e6e6e6"/><rect x="0" y="5" width="13" height="1" fill="#6e6e6e"/><polyline points="4.0,4.0 6.5,1.5 9.0,4.0" fill="none" stroke="#3c3c3c" stroke-width="1.1"/><polyline points="4.0,7.5 6.5,10.0 9.0,7.5" fill="none" stroke="#3c3c3c" stroke-width="1.1"/></svg></div><div class="t" style="right:1490px;top:497px;font-size:10px;letter-spacing:-0.5px">0.0000</div><div class="t " style="left:446px;top:496px;font-size:11px">A</div><div class="t " style="left:182px;top:521px;font-size:10.9px">Iout Cal Gain:</div><div class="a" style="left:349px;top:519px;width:101px;height:18px;background:#fff;border:1px solid #b5a898"></div><div class="sp" style="left:433px;top:521px;width:15px;height:14px;border-color:#6e6e6e"><svg width="13" height="12" style="position:absolute;left:0;top:0"><rect x="1" y="1" width="11" height="3" fill="#e6e6e6"/><rect x="1" y="7" width="11" height="4" fill="#e6e6e6"/><rect x="0" y="5" width="13" height="1" fill="#6e6e6e"/><polyline points="4.0,4.0 6.5,1.5 9.0,4.0" fill="none" stroke="#3c3c3c" stroke-width="1.1"/><polyline points="4.0,7.5 6.5,10.0 9.0,7.5" fill="none" stroke="#3c3c3c" stroke-width="1.1"/></svg></div><div class="t" style="right:1483px;top:523px;font-size:10px;letter-spacing:-0.5px">1.000</div><div class="t " style="left:182px;top:547px;font-size:10.9px">Iout OC Warn Limit:</div><div class="a" style="left:349px;top:545px;width:94px;height:18px;background:#fff;border:1px solid #b5a898"></div><div class="sp" style="left:426px;top:547px;width:15px;height:14px;border-color:#6e6e6e"><svg width="13" height="12" style="position:absolute;left:0;top:0"><rect x="1" y="1" width="11" height="3" fill="#e6e6e6"/><rect x="1" y="7" width="11" height="4" fill="#e6e6e6"/><rect x="0" y="5" width="13" height="1" fill="#6e6e6e"/><polyline points="4.0,4.0 6.5,1.5 9.0,4.0" fill="none" stroke="#3c3c3c" stroke-width="1.1"/><polyline points="4.0,7.5 6.5,10.0 9.0,7.5" fill="none" stroke="#3c3c3c" stroke-width="1.1"/></svg></div><div class="t" style="right:1490px;top:549px;font-size:10px;letter-spacing:-0.5px">40.00</div><div class="t " style="left:446px;top:548px;font-size:11px">A</div><div class="t " style="left:182px;top:573px;font-size:10.9px">Iout OC Fault Limit:</div><div class="a" style="left:349px;top:571px;width:94px;height:18px;background:#fff;border:1px solid #b5a898"></div><div class="sp" style="left:426px;top:573px;width:15px;height:14px;border-color:#6e6e6e"><svg width="13" height="12" style="position:absolute;left:0;top:0"><rect x="1" y="1" width="11" height="3" fill="#e6e6e6"/><rect x="1" y="7" width="11" height="4" fill="#e6e6e6"/><rect x="0" y="5" width="13" height="1" fill="#6e6e6e"/><polyline points="4.0,4.0 6.5,1.5 9.0,4.0" fill="none" stroke="#3c3c3c" stroke-width="1.1"/><polyline points="4.0,7.5 6.5,10.0 9.0,7.5" fill="none" stroke="#3c3c3c" stroke-width="1.1"/></svg></div><div class="t" style="right:1490px;top:575px;font-size:10px;letter-spacing:-0.5px">52.00</div><div class="t " style="left:446px;top:574px;font-size:11px">A</div><div class="t " style="left:182px;top:599px;font-size:10.9px">Iout OC Fault Response:</div><div class="a" style="left:349px;top:597px;width:94px;height:20px;background:#fff;border:1px solid #b5a898"></div><div class="dd" style="left:426px;top:599px;width:15px;height:16px;border-color:#707070"><svg width="15" height="16" style="position:absolute;left:-1px;top:-1px"><polyline points="3.8,6.0 7.5,10.2 11.2,6.0" fill="none" stroke="#555" stroke-width="1.3"/></svg></div><div class="t " style="left:355px;top:601px;font-size:11px">Response=...</div><div class="t " style="left:182px;top:625px;font-size:10.9px">Temp Warn Limit:</div><div class="a" style="left:349px;top:623px;width:94px;height:18px;background:#fff;border:1px solid #b5a898"></div><div class="sp" style="left:426px;top:625px;width:15px;height:14px;border-color:#6e6e6e"><svg width="13" height="12" style="position:absolute;left:0;top:0"><rect x="1" y="1" width="11" height="3" fill="#e6e6e6"/><rect x="1" y="7" width="11" height="4" fill="#e6e6e6"/><rect x="0" y="5" width="13" height="1" fill="#6e6e6e"/><polyline points="4.0,4.0 6.5,1.5 9.0,4.0" fill="none" stroke="#3c3c3c" stroke-width="1.1"/><polyline points="4.0,7.5 6.5,10.0 9.0,7.5" fill="none" stroke="#3c3c3c" stroke-width="1.1"/></svg></div><div class="t" style="right:1490px;top:627px;font-size:10px;letter-spacing:-0.5px">125</div><div class="t " style="left:446px;top:627px;font-size:10px">&deg;C</div><div class="t " style="left:182px;top:651px;font-size:10.9px">Temp Fault Limit:</div><div class="a" style="left:349px;top:649px;width:94px;height:18px;background:#fff;border:1px solid #b5a898"></div><div class="sp" style="left:426px;top:651px;width:15px;height:14px;border-color:#6e6e6e"><svg width="13" height="12" style="position:absolute;left:0;top:0"><rect x="1" y="1" width="11" height="3" fill="#e6e6e6"/><rect x="1" y="7" width="11" height="4" fill="#e6e6e6"/><rect x="0" y="5" width="13" height="1" fill="#6e6e6e"/><polyline points="4.0,4.0 6.5,1.5 9.0,4.0" fill="none" stroke="#3c3c3c" stroke-width="1.1"/><polyline points="4.0,7.5 6.5,10.0 9.0,7.5" fill="none" stroke="#3c3c3c" stroke-width="1.1"/></svg></div><div class="t" style="right:1490px;top:653px;font-size:10px;letter-spacing:-0.5px">150</div><div class="t " style="left:446px;top:653px;font-size:10px">&deg;C</div><div class="t " style="left:182px;top:677px;font-size:10.9px">OT Fault Response:</div><div class="a" style="left:349px;top:675px;width:94px;height:20px;background:#fff;border:1px solid #b5a898"></div><div class="dd" style="left:426px;top:677px;width:15px;height:16px;border-color:#707070"><svg width="15" height="16" style="position:absolute;left:-1px;top:-1px"><polyline points="3.8,6.0 7.5,10.2 11.2,6.0" fill="none" stroke="#555" stroke-width="1.3"/></svg></div><div class="t " style="left:355px;top:679px;font-size:11px">Response=...</div><div class="a" style="left:656px;top:490px;width:218px;height:420px;border:1px solid #a6a6a6;background:#ececec"></div><div class="a" style="left:657px;top:491px;width:1px;height:420px;background:#fff"></div><div class="a" style="left:722px;top:490px;width:1px;height:420px;background:#a6a6a6"></div><div class="a" style="left:723px;top:490px;width:1px;height:420px;background:#fff"></div><div class="a" style="left:841px;top:490px;width:1px;height:420px;background:#a6a6a6"></div><div class="a" style="left:842px;top:490px;width:1px;height:420px;background:#fff"></div><div class="a" style="left:657px;top:491px;width:216px;height:1px;background:#fff"></div><div class="t " style="left:660px;top:498px;font-size:10.2px">GMI</div><div class="a" style="left:727px;top:495px;width:109px;height:20px;background:#fff;border:1px solid #b5a898"></div><div class="dd" style="left:819px;top:497px;width:15px;height:16px;border-color:#707070"><svg width="15" height="16" style="position:absolute;left:-1px;top:-1px"><polyline points="3.8,6.0 7.5,10.2 11.2,6.0" fill="none" stroke="#555" stroke-width="1.3"/></svg></div><div class="t " style="left:731px;top:499px;font-size:11px">100</div><div class="t " style="left:845px;top:496px;font-size:10.5px">&mu;s</div><div class="a" style="left:656px;top:517px;width:218px;height:1px;background:#a6a6a6"></div><div class="a" style="left:657px;top:518px;width:216px;height:1px;background:#fff"></div><div class="t " style="left:660px;top:525px;font-size:10.2px">RVI</div><div class="a" style="left:727px;top:522px;width:109px;height:20px;background:#fff;border:1px solid #b5a898"></div><div class="dd" style="left:819px;top:524px;width:15px;height:16px;border-color:#707070"><svg width="15" height="16" style="position:absolute;left:-1px;top:-1px"><polyline points="3.8,6.0 7.5,10.2 11.2,6.0" fill="none" stroke="#555" stroke-width="1.3"/></svg></div><div class="t " style="left:731px;top:526px;font-size:11px">40</div><div class="t " style="left:845px;top:523px;font-size:10.5px">k&Omega;</div><div class="a" style="left:656px;top:544px;width:218px;height:1px;background:#a6a6a6"></div><div class="a" style="left:657px;top:545px;width:216px;height:1px;background:#fff"></div><div class="t " style="left:660px;top:552px;font-size:10.2px">CZI_MULT</div><div class="a" style="left:727px;top:549px;width:109px;height:20px;background:#fff;border:1px solid #b5a898"></div><div class="dd" style="left:819px;top:551px;width:15px;height:16px;border-color:#707070"><svg width="15" height="16" style="position:absolute;left:-1px;top:-1px"><polyline points="3.8,6.0 7.5,10.2 11.2,6.0" fill="none" stroke="#555" stroke-width="1.3"/></svg></div><div class="t " style="left:731px;top:553px;font-size:11px">80</div><div class="a" style="left:656px;top:571px;width:218px;height:1px;background:#a6a6a6"></div><div class="a" style="left:657px;top:572px;width:216px;height:1px;background:#fff"></div><div class="t " style="left:660px;top:579px;font-size:10.2px">CZI</div><div class="a" style="left:727px;top:576px;width:109px;height:20px;background:#fff;border:1px solid #b5a898"></div><div class="dd" style="left:819px;top:578px;width:15px;height:16px;border-color:#707070"><svg width="15" height="16" style="position:absolute;left:-1px;top:-1px"><polyline points="3.8,6.0 7.5,10.2 11.2,6.0" fill="none" stroke="#555" stroke-width="1.3"/></svg></div><div class="t " style="left:731px;top:580px;font-size:11px">239.76</div><div class="t " style="left:845px;top:577px;font-size:10.5px">pF</div><div class="a" style="left:656px;top:598px;width:218px;height:1px;background:#a6a6a6"></div><div class="a" style="left:657px;top:599px;width:216px;height:1px;background:#fff"></div><div class="t " style="left:660px;top:606px;font-size:10.2px">CPI</div><div class="a" style="left:727px;top:603px;width:109px;height:20px;background:#fff;border:1px solid #b5a898"></div><div class="dd" style="left:819px;top:605px;width:15px;height:16px;border-color:#707070"><svg width="15" height="16" style="position:absolute;left:-1px;top:-1px"><polyline points="3.8,6.0 7.5,10.2 11.2,6.0" fill="none" stroke="#555" stroke-width="1.3"/></svg></div><div class="t " style="left:731px;top:607px;font-size:11px">9.6</div><div class="t " style="left:845px;top:604px;font-size:10.5px">pF</div><div class="a" style="left:656px;top:625px;width:218px;height:1px;background:#a6a6a6"></div><div class="a" style="left:657px;top:626px;width:216px;height:1px;background:#fff"></div><div class="t " style="left:660px;top:633px;font-size:10.2px">GMV</div><div class="a" style="left:727px;top:630px;width:109px;height:20px;background:#fff;border:1px solid #b5a898"></div><div class="dd" style="left:819px;top:632px;width:15px;height:16px;border-color:#707070"><svg width="15" height="16" style="position:absolute;left:-1px;top:-1px"><polyline points="3.8,6.0 7.5,10.2 11.2,6.0" fill="none" stroke="#555" stroke-width="1.3"/></svg></div><div class="t " style="left:731px;top:634px;font-size:11px">50</div><div class="t " style="left:845px;top:631px;font-size:10.5px">&mu;s</div><div class="a" style="left:656px;top:652px;width:218px;height:1px;background:#a6a6a6"></div><div class="a" style="left:657px;top:653px;width:216px;height:1px;background:#fff"></div><div class="t " style="left:660px;top:660px;font-size:10.2px">RVV</div><div class="a" style="left:727px;top:657px;width:109px;height:20px;background:#fff;border:1px solid #b5a898"></div><div class="dd" style="left:819px;top:659px;width:15px;height:16px;border-color:#707070"><svg width="15" height="16" style="position:absolute;left:-1px;top:-1px"><polyline points="3.8,6.0 7.5,10.2 11.2,6.0" fill="none" stroke="#555" stroke-width="1.3"/></svg></div><div class="t " style="left:731px;top:661px;font-size:11px">80</div><div class="t " style="left:845px;top:658px;font-size:10.5px">k&Omega;</div><div class="a" style="left:656px;top:679px;width:218px;height:1px;background:#a6a6a6"></div><div class="a" style="left:657px;top:680px;width:216px;height:1px;background:#fff"></div><div class="t " style="left:660px;top:687px;font-size:10.2px">CZV</div><div class="a" style="left:727px;top:684px;width:109px;height:20px;background:#fff;border:1px solid #b5a898"></div><div class="dd" style="left:819px;top:686px;width:15px;height:16px;border-color:#707070"><svg width="15" height="16" style="position:absolute;left:-1px;top:-1px"><polyline points="3.8,6.0 7.5,10.2 11.2,6.0" fill="none" stroke="#555" stroke-width="1.3"/></svg></div><div class="t " style="left:731px;top:688px;font-size:11px">250</div><div class="t " style="left:845px;top:685px;font-size:10.5px">pF</div><div class="a" style="left:656px;top:706px;width:218px;height:1px;background:#a6a6a6"></div><div class="a" style="left:657px;top:707px;width:216px;height:1px;background:#fff"></div><div class="t " style="left:660px;top:714px;font-size:10.2px">CPV</div><div class="a" style="left:727px;top:711px;width:109px;height:20px;background:#fff;border:1px solid #b5a898"></div><div class="dd" style="left:819px;top:713px;width:15px;height:16px;border-color:#707070"><svg width="15" height="16" style="position:absolute;left:-1px;top:-1px"><polyline points="3.8,6.0 7.5,10.2 11.2,6.0" fill="none" stroke="#555" stroke-width="1.3"/></svg></div><div class="t " style="left:731px;top:715px;font-size:11px">6.25</div><div class="t " style="left:845px;top:712px;font-size:10.5px">pF</div><div class="a" style="left:656px;top:733px;width:218px;height:1px;background:#a6a6a6"></div><div class="a" style="left:657px;top:734px;width:216px;height:1px;background:#fff"></div><div class="t " style="left:660px;top:741px;font-size:10.2px">MB VLOOP</div><div class="t " style="left:727px;top:740px;font-size:11px">4.0000</div><div class="a" style="left:656px;top:760px;width:218px;height:1px;background:#a6a6a6"></div><div class="a" style="left:657px;top:761px;width:216px;height:1px;background:#fff"></div><div class="t " style="left:660px;top:768px;font-size:10.2px">F zv</div><div class="t " style="left:727px;top:767px;font-size:11px">7.9563</div><div class="t " style="left:845px;top:766px;font-size:10.5px">kHz</div><div class="a" style="left:656px;top:787px;width:218px;height:1px;background:#a6a6a6"></div><div class="a" style="left:657px;top:788px;width:216px;height:1px;background:#fff"></div><div class="t " style="left:660px;top:795px;font-size:10.2px">F pv</div><div class="t " style="left:727px;top:794px;font-size:11px">318.2500</div><div class="t " style="left:845px;top:793px;font-size:10.5px">kHz</div><div class="a" style="left:656px;top:814px;width:218px;height:1px;background:#a6a6a6"></div><div class="a" style="left:657px;top:815px;width:216px;height:1px;background:#fff"></div><div class="t " style="left:660px;top:822px;font-size:10.2px">MB ILOOP</div><div class="t " style="left:727px;top:821px;font-size:11px">4.0000</div><div class="a" style="left:656px;top:841px;width:218px;height:1px;background:#a6a6a6"></div><div class="a" style="left:657px;top:842px;width:216px;height:1px;background:#fff"></div><div class="t " style="left:660px;top:849px;font-size:10.2px">F zi</div><div class="t " style="left:727px;top:848px;font-size:11px">16.5799</div><div class="t " style="left:845px;top:847px;font-size:10.5px">kHz</div><div class="a" style="left:656px;top:868px;width:218px;height:1px;background:#a6a6a6"></div><div class="a" style="left:657px;top:869px;width:216px;height:1px;background:#fff"></div><div class="t " style="left:660px;top:876px;font-size:10.2px">F pi</div><div class="t " style="left:727px;top:875px;font-size:11px">414.4583</div><div class="t " style="left:845px;top:874px;font-size:10.5px">kHz</div><div class="a" style="left:656px;top:895px;width:218px;height:1px;background:#a6a6a6"></div><div class="a" style="left:657px;top:896px;width:216px;height:1px;background:#fff"></div><div class="t " style="left:914px;top:494px;font-size:10.6px">VDD5 regulator voltage</div><div class="a" style="left:1128px;top:493px;width:209px;height:20px;background:#fff;border:1px solid #b5a898"></div><div class="dd" style="left:1320px;top:495px;width:15px;height:16px;border-color:#707070"><svg width="15" height="16" style="position:absolute;left:-1px;top:-1px"><polyline points="3.8,6.0 7.5,10.2 11.2,6.0" fill="none" stroke="#555" stroke-width="1.3"/></svg></div><div class="t " style="left:1132px;top:497px;font-size:10.6px">4.7V</div><div class="a" style="left:927px;top:559px;width:393px;height:19px;background:#fff;border:1px solid #b5a898"></div><div class="dd" style="left:1303px;top:561px;width:15px;height:15px;border-color:#707070"><svg width="15" height="15" style="position:absolute;left:-1px;top:-1px"><polyline points="3.8,5.5 7.5,9.7 11.2,5.5" fill="none" stroke="#555" stroke-width="1.3"/></svg></div><div class="t" style="right:614px;top:563px;font-size:10.5px">550</div><div class="t " style="left:1324px;top:564px;font-size:10.2px">kHz</div><div class="t " style="left:915px;top:635px;font-size:10.5px">FSW</div><div class="a" style="left:990px;top:631px;width:340px;height:20px;background:#fff;border:1px solid #b5a898"></div><div class="dd" style="left:1313px;top:633px;width:15px;height:16px;border-color:#707070"><svg width="15" height="16" style="position:absolute;left:-1px;top:-1px"><polyline points="3.8,6.0 7.5,10.2 11.2,6.0" fill="none" stroke="#555" stroke-width="1.3"/></svg></div><div class="t " style="left:994px;top:635px;font-size:10.8px">275 kHz</div><div class="t " style="left:915px;top:663px;font-size:10.5px">Compensation</div><div class="a" style="left:990px;top:660px;width:340px;height:20px;background:#fff;border:1px solid #b5a898"></div><div class="dd" style="left:1313px;top:662px;width:15px;height:16px;border-color:#707070"><svg width="15" height="16" style="position:absolute;left:-1px;top:-1px"><polyline points="3.8,6.0 7.5,10.2 11.2,6.0" fill="none" stroke="#555" stroke-width="1.3"/></svg></div><div class="t " style="left:994px;top:664px;font-size:11px">ILoop gain = 2, VLoop gain = 0.5, data bytes = 0x120BF01319</div><div class="a" style="left:912px;top:721px;width:427px;height:24px;border:1px solid #777;border-radius:4px;background:linear-gradient(#f7f7f7,#e3e3e3)"></div><div class="t " style="left:1024px;top:727px;font-size:10.7px;letter-spacing:-0.15px">Apply setting to USER_DATA_01 and FSW</div></div>
</body></html>
